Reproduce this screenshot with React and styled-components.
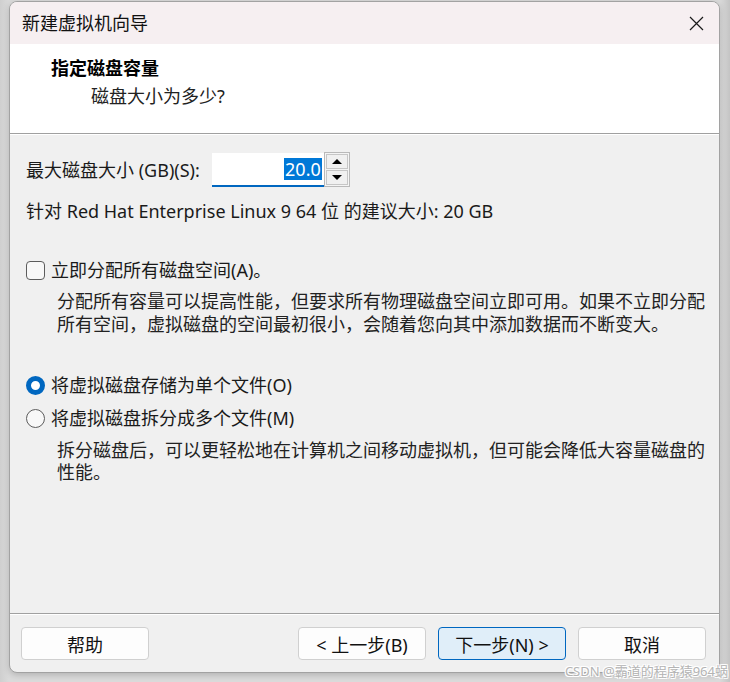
import React from "react";
import styled, { createGlobalStyle } from "styled-components";

const GlobalStyle = createGlobalStyle`
  html, body { margin: 0; padding: 0; }
  body {
    background: #d4d4d4;
    font-family: "Noto Sans", "Noto Sans CJK SC", sans-serif;
    color: #1a1a1a;
  }
`;

const Page = styled.div`
  width: 730px;
  height: 682px;
  box-sizing: border-box;
  padding: 1px 10px 9px 9px;
  position: relative;
  background: linear-gradient(90deg, #cfcfcf 0px, #dadada 9px, #dadada 720px, #c4c4c4 730px);
`;

const Window = styled.div`
  height: 100%;
  box-sizing: border-box;
  display: flex;
  flex-direction: column;
  border: 1px solid #a2a2a2;
  border-radius: 8px;
  overflow: hidden;
  background: #f0f0f0;
  box-shadow: 0 2px 6px rgba(0, 0, 0, 0.18);
`;

const TitleBar = styled.div`
  height: 42px;
  flex: none;
  display: flex;
  align-items: center;
  justify-content: space-between;
  padding: 0 15px 0 12px;
  background: #f6eff1;
`;

const TitleText = styled.div`
  font-size: 18px;
  line-height: 24px;
  color: #111;
`;

const CloseButton = styled.div`
  width: 16px;
  height: 16px;
  display: flex;
  align-items: center;
  justify-content: center;
`;

const Header = styled.div`
  height: 89px;
  flex: none;
  box-sizing: border-box;
  background: #ffffff;
  padding: 12px 0 0 41px;
`;

const HeaderTitle = styled.div`
  font-size: 18px;
  font-weight: 700;
  line-height: 24px;
  color: #000;
`;

const HeaderSub = styled.div`
  font-size: 18px;
  line-height: 24px;
  margin: 4px 0 0 40px;
  color: #222;
`;

const Divider = styled.div`
  flex: none;
  height: 0;
  border-top: 1px solid #a0a0a0;
  border-bottom: 1px solid #ffffff;
`;

const Body = styled.div`
  flex: 1;
  padding: 18px 16px 0 16px;
  font-size: 18px;
`;

const SizeRow = styled.div`
  display: flex;
  align-items: center;
  gap: 12px;
  height: 34px;
`;

const Label = styled.span`
  line-height: 24px;
`;

const SpinBox = styled.div`
  display: flex;
  align-items: stretch;
  height: 34px;
`;

const SpinInput = styled.div`
  width: 112px;
  box-sizing: border-box;
  background: #ffffff;
  border-bottom: 2px solid #0067c0;
  display: flex;
  align-items: center;
  justify-content: flex-end;
  padding: 0 2px 0 0;
`;

const Selected = styled.span`
  background: #0078d7;
  color: #ffffff;
  line-height: 22px;
  padding: 0 1px;
  font-size: 18px;
`;

const Spinner = styled.div`
  width: 26px;
  box-sizing: border-box;
  border: 1px solid #b9b9b9;
  margin-top: -1px;
  height: 35px;
  display: flex;
  flex-direction: column;
  padding: 1px;
  gap: 1px;
  background: #f4f4f4;
`;

const SpinButton = styled.div`
  flex: 1;
  border: 1px solid #c6c6c6;
  background: #f0f0f0;
  display: flex;
  align-items: center;
  justify-content: center;
`;

const Triangle = styled.div`
  width: 0;
  height: 0;
  border-left: 5px solid transparent;
  border-right: 5px solid transparent;
  ${(p) => (p.$up ? "border-bottom: 5px solid #000;" : "border-top: 5px solid #000;")}
`;

const Line = styled.div`
  line-height: 24px;
  margin-top: ${(p) => p.$mt || 0}px;
`;

const OptionRow = styled.label`
  display: flex;
  align-items: center;
  gap: 6px;
  line-height: 24px;
  margin-top: ${(p) => p.$mt || 0}px;
`;

const CheckBox = styled.span`
  width: 19px;
  height: 19px;
  box-sizing: border-box;
  border: 1px solid #5c5c5c;
  border-radius: 4px;
  background: #f8f8f8;
  flex: none;
`;

const Radio = styled.span`
  width: 19px;
  height: 19px;
  box-sizing: border-box;
  border-radius: 50%;
  flex: none;
  ${(p) =>
    p.$checked
      ? `background: #ffffff; border: 5px solid #0067c0;`
      : `background: #f8f8f8; border: 1px solid #5c5c5c;`}
`;

const Description = styled.div`
  margin: ${(p) => p.$mt || 0}px 0 0 31px;
  line-height: ${(p) => p.$lh || 23}px;
  color: #222;
  white-space: nowrap;
`;

const Footer = styled.div`
  flex: none;
  display: flex;
  align-items: center;
  padding: 12px 13px 12px 11px;
`;

const Spacer = styled.div`
  flex: 1;
`;

const Button = styled.div`
  width: 128px;
  height: 33px;
  box-sizing: border-box;
  display: flex;
  align-items: center;
  justify-content: center;
  font-size: 18px;
  border-radius: 4px;
  margin-left: ${(p) => p.$ml || 0}px;
  background: ${(p) => (p.$primary ? "#e0eef9" : "#fdfdfd")};
  border: 1px solid ${(p) => (p.$primary ? "#0067c0" : "#d0d0d0")};
  color: #111;
`;

const Watermark = styled.div`
  position: absolute;
  right: 2px;
  bottom: 3px;
  font-size: 13px;
  line-height: 16px;
  color: #b4b4b4;
  text-shadow: 1px 1px 0 #fff, -1px -1px 0 #fff, 1px -1px 0 #fff, -1px 1px 0 #fff;
  white-space: nowrap;
`;

export default function App() {
  return (
    <>
      <GlobalStyle />
      <Page>
        <Window>
          <TitleBar>
            <TitleText>新建虚拟机向导</TitleText>
            <CloseButton>
              <svg width="15" height="15" viewBox="0 0 15 15">
                <path d="M1 1 L14 14 M14 1 L1 14" stroke="#1a1a1a" strokeWidth="1.2" fill="none" />
              </svg>
            </CloseButton>
          </TitleBar>
          <Header>
            <HeaderTitle>指定磁盘容量</HeaderTitle>
            <HeaderSub>磁盘大小为多少?</HeaderSub>
          </Header>
          <Divider />
          <Body>
            <SizeRow>
              <Label>最大磁盘大小 (GB)(S):</Label>
              <SpinBox>
                <SpinInput>
                  <Selected>20.0</Selected>
                </SpinInput>
                <Spinner>
                  <SpinButton>
                    <Triangle $up />
                  </SpinButton>
                  <SpinButton>
                    <Triangle />
                  </SpinButton>
                </Spinner>
              </SpinBox>
            </SizeRow>
            <Line $mt={12}>针对 Red Hat Enterprise Linux 9 64 位 的建议大小: 20 GB</Line>
            <OptionRow $mt={35}>
              <CheckBox />
              <span>立即分配所有磁盘空间(A)。</span>
            </OptionRow>
            <Description $mt={8}>
              分配所有容量可以提高性能，但要求所有物理磁盘空间立即可用。如果不立即分配
              <br />
              所有空间，虚拟磁盘的空间最初很小，会随着您向其中添加数据而不断变大。
            </Description>
            <OptionRow $mt={37}>
              <Radio $checked />
              <span>将虚拟磁盘存储为单个文件(O)</span>
            </OptionRow>
            <OptionRow $mt={9}>
              <Radio />
              <span>将虚拟磁盘拆分成多个文件(M)</span>
            </OptionRow>
            <Description $mt={9} $lh={22}>
              拆分磁盘后，可以更轻松地在计算机之间移动虚拟机，但可能会降低大容量磁盘的
              <br />
              性能。
            </Description>
          </Body>
          <Divider />
          <Footer>
            <Button>帮助</Button>
            <Spacer />
            <Button>&lt; 上一步(B)</Button>
            <Button $primary $ml={12}>下一步(N) &gt;</Button>
            <Button $ml={12}>取消</Button>
          </Footer>
        </Window>
        <Watermark>CSDN @霸道的程序猿964蜗</Watermark>
      </Page>
    </>
  );
}
